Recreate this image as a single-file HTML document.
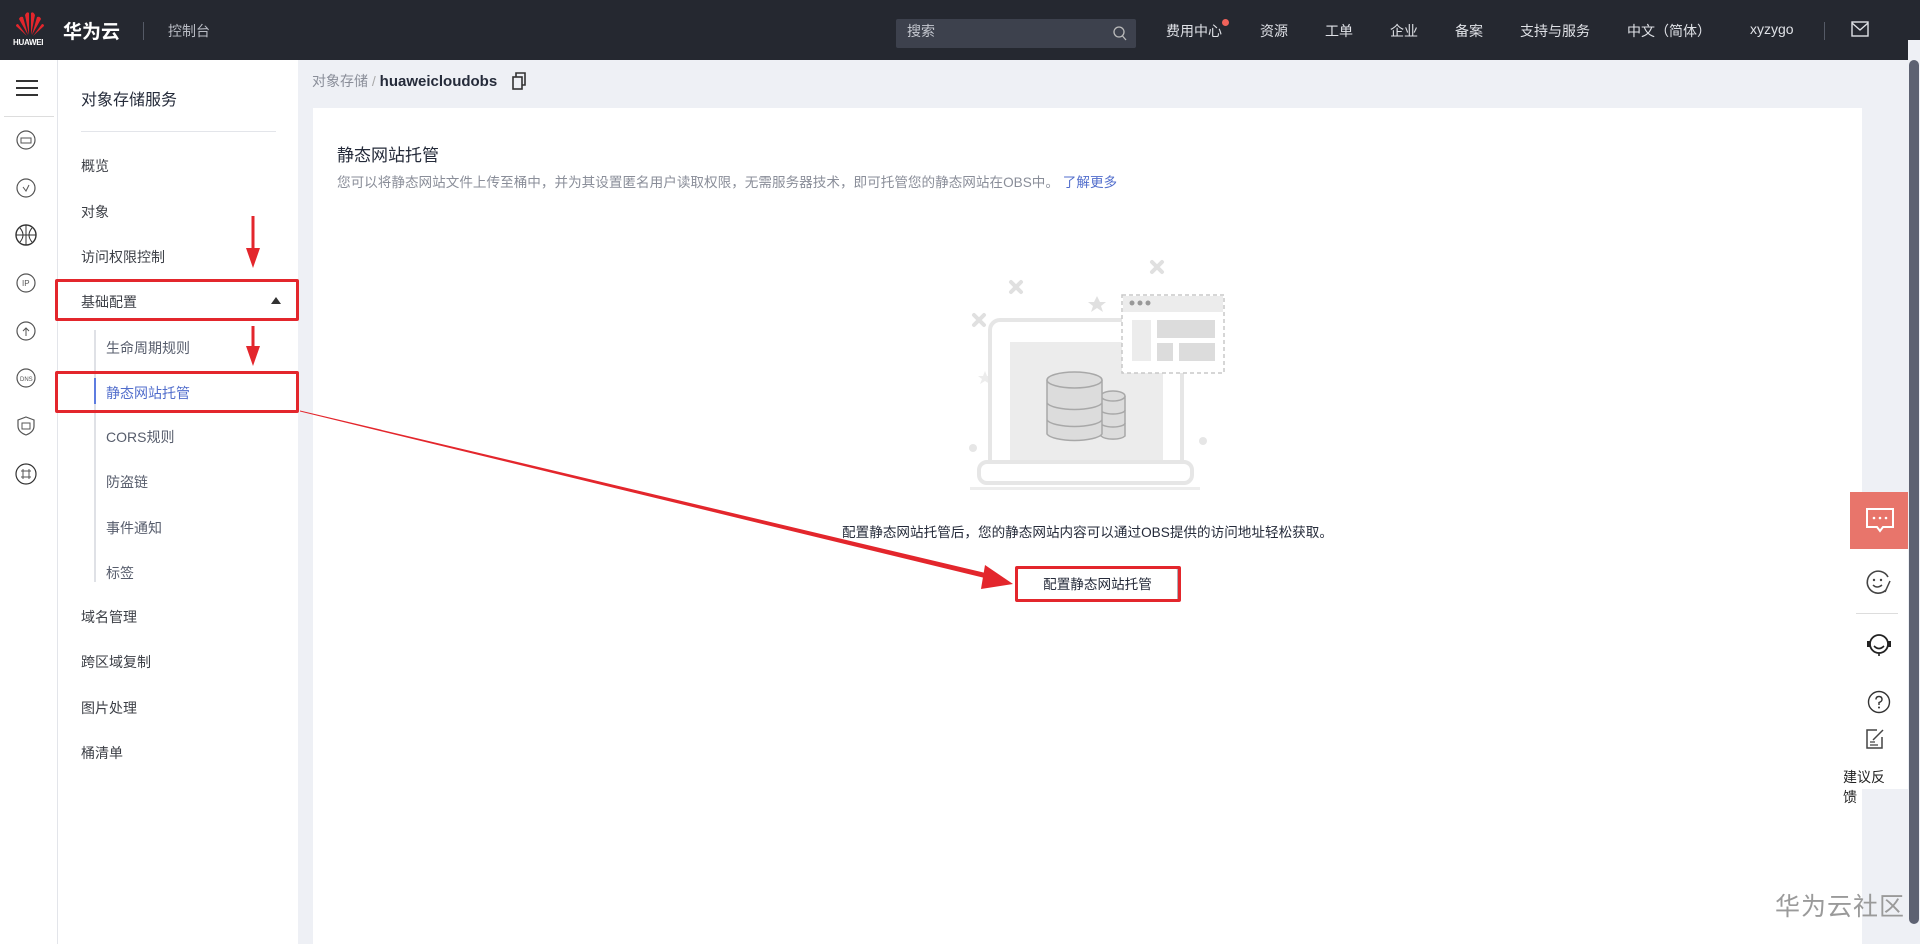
<!DOCTYPE html>
<html><head><meta charset="utf-8">
<style>
*{margin:0;padding:0;box-sizing:border-box}
body{width:1920px;height:944px;overflow:hidden;background:#eef0f5;font-family:"Liberation Sans","Noto Sans CJK SC",sans-serif;position:relative;color:#252b3a}
.abs{position:absolute}
.top{left:0;top:0;width:1920px;height:60px;background:#252830}
.top .t{position:absolute;top:21px;font-size:14px;color:#dfe1e6;white-space:nowrap}
.rail{left:0;top:60px;width:58px;height:884px;background:#fff;border-right:1px solid #e3e5ea}
.nav{left:58px;top:60px;width:240px;height:884px;background:#fff}
.nav .i{position:absolute;left:23px;font-size:14px;color:#3c3f46;white-space:nowrap}
.nav .s{left:48px;color:#575d6c}
.card{left:313px;top:108px;width:1549px;height:836px;background:#fff}
.ic{position:absolute;left:14px;width:24px;height:24px}
</style></head><body>
<div class="abs top">
 <svg class="abs" style="left:14px;top:9px" width="32" height="30" viewBox="0 0 32 30">
  <g fill="#e3262c">
   <path d="M15 26 L11 6 Q13 2 15 4Z"/><path d="M17 26 L21 6 Q19 2 17 4Z"/>
   <path d="M14 26 L5 10 Q6 7 9 8Z"/><path d="M18 26 L27 10 Q26 7 23 8Z"/>
   <path d="M13 27 L2 17 Q2 15 4 15Z"/><path d="M19 27 L30 17 Q30 15 28 15Z"/>
  </g></svg>
 <div class="abs" style="left:13px;top:38px;font-size:8px;color:#fff;font-weight:bold;letter-spacing:-0.3px">HUAWEI</div>
 <div class="abs" style="left:63px;top:17px;font-size:19px;font-weight:bold;color:#fff">华为云</div>
 <div class="abs" style="left:143px;top:22px;width:1px;height:18px;background:#555a66"></div>
 <div class="t" style="left:168px;color:#b9bcc4">控制台</div>
 <div class="abs" style="left:896px;top:19px;width:240px;height:29px;background:#3d414d;border-radius:2px"></div>
 <div class="t" style="left:907px;color:#c5c8d0">搜索</div>
 <svg class="abs" style="left:1113px;top:26px" width="14" height="16" viewBox="0 0 14 16"><circle cx="6" cy="6" r="5" fill="none" stroke="#bbb" stroke-width="1.3"/><path d="M9.5 10 L13 14" stroke="#bbb" stroke-width="1.3"/></svg>
 <div class="t" style="left:1166px">费用中心</div>
 <div class="abs" style="left:1222px;top:19px;width:7px;height:7px;border-radius:50%;background:#f0625a"></div>
 <div class="t" style="left:1260px">资源</div>
 <div class="t" style="left:1325px">工单</div>
 <div class="t" style="left:1390px">企业</div>
 <div class="t" style="left:1455px">备案</div>
 <div class="t" style="left:1520px">支持与服务</div>
 <div class="t" style="left:1627px">中文（简体）</div>
 <div class="t" style="left:1750px">xyzygo</div>
 <div class="abs" style="left:1824px;top:22px;width:1px;height:18px;background:#555a66"></div>
 <svg class="abs" style="left:1851px;top:21px" width="18" height="16" viewBox="0 0 18 16"><rect x="1" y="1" width="16" height="14" fill="none" stroke="#dfe1e6" stroke-width="1.4"/><path d="M1 2 L9 9 L17 2" fill="none" stroke="#dfe1e6" stroke-width="1.4"/></svg>
</div>
<div class="abs" style="left:1908px;top:40px;width:12px;height:904px;background:#eef0f5"></div>
<div class="abs" style="left:1909px;top:60px;width:10px;height:864px;background:#5d6272;border-radius:5px"></div>

<div class="abs rail">
 <div class="abs" style="left:16px;top:20px;width:22px;height:2px;background:#333"></div>
 <div class="abs" style="left:16px;top:27px;width:22px;height:2px;background:#333"></div>
 <div class="abs" style="left:16px;top:34px;width:22px;height:2px;background:#333"></div>
 <div class="abs" style="left:4px;top:56px;width:50px;height:1px;background:#ddd"></div>
 <svg class="ic" style="top:68px" viewBox="0 0 24 24"><circle cx="12" cy="12" r="9" fill="none" stroke="#555" stroke-width="1.2"/><rect x="7" y="10" width="10" height="5" fill="none" stroke="#555"/></svg>
 <svg class="ic" style="top:116px" viewBox="0 0 24 24"><circle cx="12" cy="12" r="9" fill="none" stroke="#555" stroke-width="1.2"/><path d="M9 11 L12 15 L15 9" fill="none" stroke="#555"/></svg>
 <svg class="ic" style="top:163px" viewBox="0 0 24 24"><circle cx="12" cy="12" r="10" fill="none" stroke="#333" stroke-width="1.4"/><path d="M2 12H22M12 2V22M6 5Q12 12 6 19M18 5Q12 12 18 19" fill="none" stroke="#333"/></svg>
 <svg class="ic" style="top:211px" viewBox="0 0 24 24"><circle cx="12" cy="12" r="9" fill="none" stroke="#555" stroke-width="1.2"/><text x="8" y="15" font-size="8" fill="#555">IP</text></svg>
 <svg class="ic" style="top:259px" viewBox="0 0 24 24"><circle cx="12" cy="12" r="9" fill="none" stroke="#555" stroke-width="1.2"/><path d="M12 17V9M9 12L12 9L15 12" fill="none" stroke="#555"/></svg>
 <svg class="ic" style="top:306px" viewBox="0 0 24 24"><circle cx="12" cy="12" r="9" fill="none" stroke="#555" stroke-width="1.2"/><text x="6" y="15" font-size="6" fill="#555">DNS</text></svg>
 <svg class="ic" style="top:354px" viewBox="0 0 24 24"><path d="M12 3L20 6V12Q20 18 12 21Q4 18 4 12V6Z" fill="none" stroke="#555" stroke-width="1.2"/><rect x="8" y="9" width="8" height="6" fill="none" stroke="#555"/></svg>
 <svg class="ic" style="top:402px" viewBox="0 0 24 24"><circle cx="12" cy="12" r="10" fill="none" stroke="#333" stroke-width="1.2"/><path d="M7 9H17M7 15H17M9 7V17M15 7V17" fill="none" stroke="#555"/></svg>
</div>

<div class="abs nav">
 <div class="i" style="top:26px;font-size:16px;color:#252b3a">对象存储服务</div>
 <div class="abs" style="left:23px;top:71px;width:195px;height:1px;background:#e3e5ea"></div>
 <div class="i" style="top:96px">概览</div>
 <div class="i" style="top:142px">对象</div>
 <div class="i" style="top:187px">访问权限控制</div>
 <div class="i" style="top:232px">基础配置</div>
 <div class="abs" style="left:213px;top:237px;width:0;height:0;border-left:5px solid transparent;border-right:5px solid transparent;border-bottom:7px solid #333"></div>
 <div class="abs" style="left:36px;top:270px;width:2px;height:252px;background:#dfe1e6"></div>
 <div class="abs" style="left:36px;top:318px;width:2px;height:26px;background:#5e7ce0"></div>
 <div class="i s" style="top:278px">生命周期规则</div>
 <div class="i s" style="top:323px;color:#526ecc">静态网站托管</div>
 <div class="i s" style="top:367px">CORS规则</div>
 <div class="i s" style="top:412px">防盗链</div>
 <div class="i s" style="top:458px">事件通知</div>
 <div class="i s" style="top:503px">标签</div>
 <div class="i" style="top:547px">域名管理</div>
 <div class="i" style="top:592px">跨区域复制</div>
 <div class="i" style="top:638px">图片处理</div>
 <div class="i" style="top:683px">桶清单</div>
</div>

<div class="abs" style="left:312px;top:71px;font-size:14px;color:#8a8e99">对象存储 <span style="color:#aaa">/</span> <span style="color:#252b3a;font-weight:bold;font-size:15px">huaweicloudobs</span></div>
<svg class="abs" style="left:511px;top:72px" width="16" height="18" viewBox="0 0 16 18"><rect x="2" y="5" width="9" height="12" fill="none" stroke="#333" stroke-width="1.6"/><path d="M5 5V1H14V13H11" fill="none" stroke="#333" stroke-width="1.6"/></svg>

<div class="abs card">
 <div class="abs" style="left:24px;top:33px;font-size:17px;color:#252b3a">静态网站托管</div>
 <div class="abs" style="left:24px;top:63px;font-size:13.6px;color:#8a8e99;white-space:nowrap">您可以将静态网站文件上传至桶中，并为其设置匿名用户读取权限，无需服务器技术，即可托管您的静态网站在OBS中。 <span style="color:#526ecc">了解更多</span></div>
 <div class="abs" style="left:0;width:1549px;top:413px;text-align:center;font-size:13.6px;color:#252b3a">配置静态网站托管后，您的静态网站内容可以通过OBS提供的访问地址轻松获取。</div>
 <div class="abs" style="left:704px;top:460px;width:161px;height:33px;border:1px solid #adb0b8;border-radius:2px;text-align:center;line-height:31px;font-size:13.6px;color:#252b3a">配置静态网站托管</div>
</div>

<svg class="abs" style="left:940px;top:250px" width="300" height="250" viewBox="0 0 300 250">
 <g stroke="#e0e0e0" stroke-width="4" stroke-linecap="round">
  <path d="M71 32L81 42M81 32L71 42"/><path d="M34 65L44 75M44 65L34 75"/><path d="M212 12L222 22M222 12L212 22"/>
 </g>
 <path d="M157 46L160 52L166 52L161 56L163 62L157 58L151 62L153 56L148 52L154 52Z" fill="#e0e0e0"/>
 <path d="M45 121L47 126L52 126L48 129L50 134L45 131L40 134L42 129L38 126L43 126Z" fill="#ececec"/>
 <circle cx="33" cy="198" r="4" fill="#e6e6e6"/>
 <circle cx="263" cy="191" r="4" fill="#e6e6e6"/>
 <rect x="50" y="70" width="192" height="150" rx="10" fill="none" stroke="#e6e6e6" stroke-width="4"/>
 <rect x="70" y="92" width="153" height="120" fill="#ececec"/>
 <rect x="39" y="212" width="213" height="21" rx="8" fill="#fff" stroke="#e6e6e6" stroke-width="4"/>
 <rect x="30" y="237" width="230" height="3" fill="#ededed"/>
 <g fill="#dcdcdc" stroke="#a8a8a8" stroke-width="1.5">
  <path d="M161 146V186A13 5 0 0 0 185 186V146"/><ellipse cx="173" cy="146" rx="12" ry="5"/>
  <path d="M161 160A12 4 0 0 0 185 160M161 173A12 4 0 0 0 185 173" fill="none"/>
  <path d="M107 130V184A28 8 0 0 0 162 184V130"/><ellipse cx="134.5" cy="130" rx="27.5" ry="8"/>
  <path d="M107 153A28 8 0 0 0 162 153M107 170A28 8 0 0 0 162 170" fill="none"/>
 </g>
 <rect x="182" y="45" width="102" height="78" fill="#fff" stroke="#c8c8c8" stroke-width="1.5" stroke-dasharray="4 3"/>
 <rect x="183" y="46" width="100" height="16" fill="#ececec"/>
 <circle cx="192" cy="53" r="2.5" fill="#999"/><circle cx="200" cy="53" r="2.5" fill="#999"/><circle cx="208" cy="53" r="2.5" fill="#999"/>
 <rect x="192" y="70" width="19" height="41" fill="#ececec"/>
 <rect x="217" y="70" width="58" height="18" fill="#dcdcdc"/>
 <rect x="217" y="93" width="16" height="18" fill="#dcdcdc"/>
 <rect x="239" y="93" width="36" height="18" fill="#dcdcdc"/>
 <path d="M242 124V212" stroke="#e6e6e6" stroke-width="3" stroke-dasharray="10 4"/>
</svg>

<!-- red annotations -->
<div class="abs" style="left:55px;top:279px;width:244px;height:42px;border:3px solid #e3262c;border-radius:2px"></div>
<div class="abs" style="left:55px;top:371px;width:244px;height:42px;border:3px solid #e3262c;border-radius:2px"></div>
<div class="abs" style="left:1015px;top:566px;width:166px;height:36px;border:3px solid #e3262c;border-radius:2px"></div>
<svg class="abs" style="left:0;top:0" width="1920" height="944">
 <path d="M253 216V252" stroke="#e3262c" stroke-width="3"/><path d="M246 248L253 268L260 248Z" fill="#e3262c"/>
 <path d="M253 326V350" stroke="#e3262c" stroke-width="3"/><path d="M246 346L253 366L260 346Z" fill="#e3262c"/>
 <path d="M300 410.5L300 411.5L993 580L994 575Z" fill="#e3262c"/>
 <path d="M985 565L1013 584L981 589Z" fill="#e3262c"/>
</svg>

<!-- right floating -->
<div class="abs" style="left:1841px;top:549px;width:67px;height:240px;background:#fff"></div>
<div class="abs" style="left:1850px;top:492px;width:58px;height:57px;background:#e8756b"></div>
<svg class="abs" style="left:1865px;top:506px" width="30" height="30" viewBox="0 0 30 30"><path d="M2 3H28V21H18L15 25L12 21H2Z" fill="none" stroke="#fff" stroke-width="2"/><circle cx="9" cy="12" r="1.3" fill="#fff"/><circle cx="15" cy="12" r="1.3" fill="#fff"/><circle cx="21" cy="12" r="1.3" fill="#fff"/></svg>
<svg class="abs" style="left:1864px;top:568px" width="28" height="28" viewBox="0 0 28 28"><path d="M24 9A11 11 0 1 0 22 22" fill="none" stroke="#444" stroke-width="1.6"/><circle cx="10" cy="12" r="1.2" fill="#444"/><circle cx="17" cy="12" r="1.2" fill="#444"/><path d="M9 17Q13 21 18 17" fill="none" stroke="#444" stroke-width="1.5"/><path d="M26 13L21 24" stroke="#444" stroke-width="1.5"/></svg>
<div class="abs" style="left:1856px;top:613px;width:42px;height:1px;background:#ddd"></div>
<svg class="abs" style="left:1864px;top:630px" width="30" height="30" viewBox="0 0 30 30"><circle cx="15" cy="14" r="9" fill="none" stroke="#222" stroke-width="1.8"/><path d="M10 16Q15 21 20 16" fill="none" stroke="#222" stroke-width="1.6"/><rect x="3" y="11" width="3" height="6" fill="#222"/><rect x="24" y="11" width="3" height="6" fill="#222"/><path d="M15 23V26" stroke="#222" stroke-width="1.6"/></svg>
<svg class="abs" style="left:1867px;top:690px" width="24" height="24" viewBox="0 0 24 24"><circle cx="12" cy="12" r="10.5" fill="none" stroke="#333" stroke-width="1.4"/><path d="M9 9.5Q9 6.5 12 6.5Q15 6.5 15 9.5Q15 11.5 12 12.5V15" fill="none" stroke="#333" stroke-width="1.4"/><circle cx="12" cy="17.5" r="1" fill="#333"/></svg>
<svg class="abs" style="left:1864px;top:728px" width="22" height="22" viewBox="0 0 22 22"><path d="M13 2H3V20H18V9" fill="none" stroke="#444" stroke-width="1.5"/><path d="M9 12L19 2" stroke="#444" stroke-width="1.5"/><path d="M6 14H11M6 17H14" stroke="#444" stroke-width="1.3"/></svg>
<div class="abs" style="left:1843px;top:767px;font-size:14px;color:#222;line-height:20px;width:50px">建议反馈</div>

<div class="abs" style="left:1775px;top:887px;font-size:25px;color:#9a9a9a;letter-spacing:1px">华为云社区</div>
</body></html>
